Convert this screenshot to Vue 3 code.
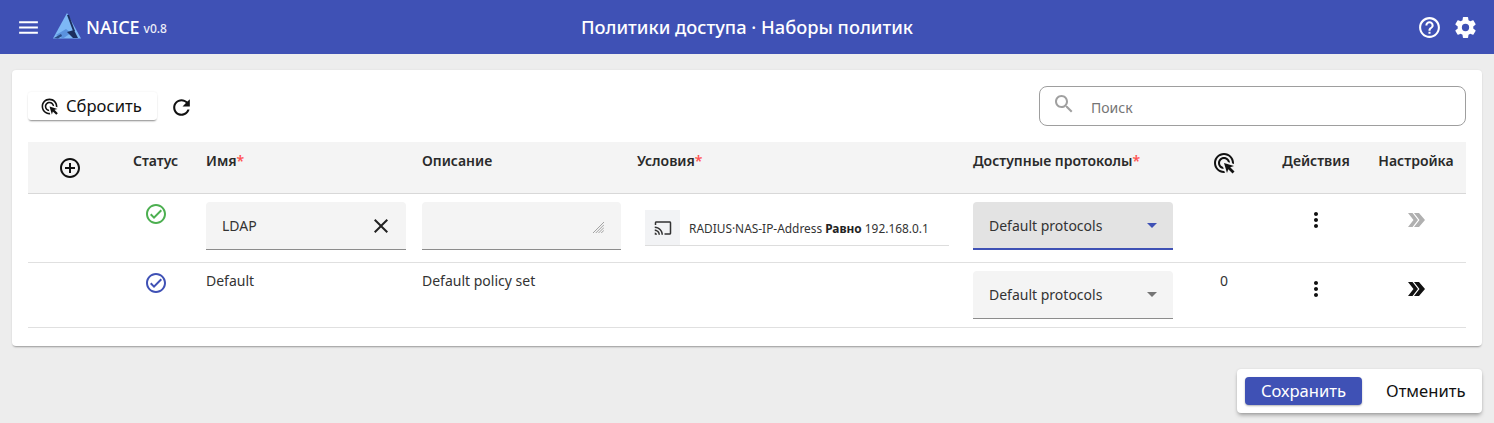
<script setup>
const icons = {
  menu: 'M3 18h18v-2H3v2zm0-5h18v-2H3v2zm0-7v2h18V6H3z',
  help: 'M11 18h2v-2h-2v2zm1-16C6.48 2 2 6.48 2 12s4.48 10 10 10 10-4.48 10-10S17.52 2 12 2zm0 18c-4.41 0-8-3.59-8-8s3.59-8 8-8 8 3.59 8 8-3.59 8-8 8zm0-14c-2.21 0-4 1.79-4 4h2c0-1.1.9-2 2-2s2 .9 2 2c0 2-3 1.75-3 5h2c0-2.25 3-2.5 3-5 0-2.21-1.79-4-4-4z',
  cog: 'M12,15.5A3.5,3.5 0 0,1 8.5,12A3.5,3.5 0 0,1 12,8.5A3.5,3.5 0 0,1 15.5,12A3.5,3.5 0 0,1 12,15.5M19.43,12.97C19.47,12.65 19.5,12.33 19.5,12C19.5,11.67 19.47,11.34 19.43,11L21.54,9.37C21.73,9.22 21.78,8.95 21.66,8.73L19.66,5.27C19.54,5.05 19.27,4.96 19.05,5.05L16.56,6.05C16.04,5.66 15.5,5.32 14.87,5.07L14.5,2.42C14.46,2.18 14.25,2 14,2H10C9.75,2 9.54,2.18 9.5,2.42L9.13,5.07C8.5,5.32 7.96,5.66 7.44,6.05L4.95,5.05C4.73,4.96 4.46,5.05 4.34,5.27L2.34,8.73C2.21,8.95 2.27,9.22 2.46,9.37L4.57,11C4.53,11.34 4.5,11.67 4.5,12C4.5,12.33 4.53,12.65 4.57,12.97L2.46,14.63C2.27,14.78 2.21,15.05 2.34,15.27L4.34,18.73C4.46,18.95 4.73,19.03 4.95,18.95L7.44,17.94C7.96,18.34 8.5,18.68 9.13,18.93L9.5,21.58C9.54,21.82 9.75,22 10,22H14C14.25,22 14.46,21.82 14.5,21.58L14.87,18.93C15.5,18.67 16.04,18.34 16.56,17.94L19.05,18.95C19.27,19.03 19.54,18.95 19.66,18.73L21.66,15.27C21.78,15.05 21.73,14.78 21.54,14.63L19.43,12.97Z',
  adsClick: 'M11.71,17.99C8.53,17.84,6,15.22,6,12c0-3.31,2.69-6,6-6c3.22,0,5.84,2.53,5.99,5.71l-2.1-0.63C15.48,9.31,13.89,8,12,8c-2.21,0-4,1.79-4,4c0,1.89,1.31,3.48,3.08,3.89L11.71,17.99z M22,12c0,0.3-0.01,0.6-0.04,0.9l-1.97-0.59C20,12.21,20,12.1,20,12c0-4.42-3.58-8-8-8s-8,3.58-8,8s3.58,8,8,8c0.1,0,0.21,0,0.31-0.01l0.59,1.97C12.6,21.99,12.3,22,12,22C6.48,22,2,17.52,2,12C2,6.48,6.48,2,12,2S22,6.48,22,12z M18.23,16.26L22,15l-10-3l3,10l1.26-3.77l4.27,4.27l1.98-1.98L18.23,16.26z',
  refresh: 'M17.65 6.35C16.2 4.9 14.21 4 12 4c-4.42 0-7.99 3.58-7.99 8s3.57 8 7.99 8c3.73 0 6.84-2.55 7.73-6h-2.08c-.82 2.33-3.04 4-5.65 4-3.31 0-6-2.69-6-6s2.69-6 6-6c1.66 0 3.14.69 4.22 1.78L13 11h7V4l-2.35 2.35z',
  search: 'M15.5 14h-.79l-.28-.27C15.41 12.59 16 11.11 16 9.5 16 5.91 13.09 3 9.5 3S3 5.91 3 9.5 5.91 16 9.5 16c1.61 0 3.09-.59 4.23-1.57l.27.28v.79l5 4.99L20.49 19l-4.99-5zm-6 0C7.01 14 5 11.99 5 9.5S7.01 5 9.5 5 14 7.01 14 9.5 11.99 14 9.5 14z',
  add: 'M13 7h-2v4H7v2h4v4h2v-4h4v-2h-4V7zm-1-5C6.48 2 2 6.48 2 12s4.48 10 10 10 10-4.48 10-10S17.52 2 12 2zm0 18c-4.41 0-8-3.59-8-8s3.59-8 8-8 8 3.59 8 8-3.59 8-8 8z',
  check: 'M12 2C6.48 2 2 6.48 2 12s4.48 10 10 10 10-4.48 10-10S17.52 2 12 2zm0 18c-4.41 0-8-3.59-8-8s3.59-8 8-8 8 3.59 8 8-3.59 8-8 8zm4.59-12.42L10 14.17l-2.59-2.58L6 13l4 4 8-8z',
  close: 'M19 6.41 17.59 5 12 10.59 6.41 5 5 6.41 10.59 12 5 17.59 6.41 19 12 13.41 17.59 19 19 17.59 13.41 12z',
  cast: 'M21 3H3c-1.1 0-2 .9-2 2v3h2V5h18v14h-7v2h7c1.1 0 2-.9 2-2V5c0-1.1-.9-2-2-2zM1 18v3h3c0-1.66-1.34-3-3-3zm0-4v2c2.76 0 5 2.24 5 5h2c0-3.87-3.13-7-7-7zm0-4v2c4.97 0 9 4.03 9 9h2c0-6.08-4.93-11-11-11z',
  dots: 'M12 8c1.1 0 2-.9 2-2s-.9-2-2-2-2 .9-2 2 .9 2 2 2zm0 2c-1.1 0-2 .9-2 2s.9 2 2 2 2-.9 2-2-.9-2-2-2zm0 6c-1.1 0-2 .9-2 2s.9 2 2 2 2-.9 2-2-.9-2-2-2z',
  chevrons: 'M0 0h4.5L10 7l-5.5 7H0l5.5-7zM6 0h5l6 7-6 7H6l5.5-7z',
}
</script>

<template>
  <div class="page">
    <header class="topbar">
      <div class="brand">
        <svg class="icon menu-icon" viewBox="0 0 24 24"><path :d="icons.menu" /></svg>
        <svg class="logo" viewBox="0 0 28 26">
          <polygon points="14,0 28,25.5 0,25.5" fill="#7db8f5" />
          <polygon points="3,22 13,16 18,20 10,25.5" fill="#5a92de" />
          <polygon points="14,2 16,2 22,18 20,18" fill="#1c2f5e" />
          <polygon points="14,19 21,17 25,25 20,25" fill="#1c2f5e" />
          <polygon points="1,25 8,21 9,23 5,25.5" fill="#2a4a85" />
        </svg>
        <span class="brand-name">NAICE</span>
        <span class="brand-version">v0.8</span>
      </div>
      <div class="page-title">Политики доступа · Наборы политик</div>
      <div class="top-actions">
        <svg class="icon top-icon" viewBox="0 0 24 24"><path :d="icons.help" /></svg>
        <svg class="icon top-icon" viewBox="0 0 24 24"><path :d="icons.cog" /></svg>
      </div>
    </header>

    <main class="card">
      <div class="toolbar">
        <div class="toolbar-left">
          <button class="reset-btn">
            <svg class="icon reset-icon" viewBox="0 0 24 24"><path :d="icons.adsClick" /></svg>
            <span>Сбросить</span>
          </button>
          <svg class="icon refresh-icon" viewBox="0 0 24 24"><path :d="icons.refresh" /></svg>
        </div>
        <div class="search">
          <svg class="icon search-icon" viewBox="0 0 24 24"><path :d="icons.search" /></svg>
          <span>Поиск</span>
        </div>
      </div>

      <div class="row head">
        <div class="cell center add-cell">
          <svg class="icon add-icon" viewBox="0 0 24 24"><path :d="icons.add" /></svg>
        </div>
        <div class="cell center">Статус</div>
        <div class="cell">Имя<span class="req">*</span></div>
        <div class="cell">Описание</div>
        <div class="cell">Условия<span class="req">*</span></div>
        <div class="cell">Доступные протоколы<span class="req">*</span></div>
        <div class="cell center">
          <svg class="icon head-click" viewBox="0 0 24 24"><path :d="icons.adsClick" /></svg>
        </div>
        <div class="cell center">Действия</div>
        <div class="cell center">Настройка</div>
      </div>

      <div class="row body-row first">
        <div class="cell"></div>
        <div class="cell center">
          <svg class="icon status green" viewBox="0 0 24 24"><path :d="icons.check" /></svg>
        </div>
        <div class="cell">
          <div class="field">
            <span>LDAP</span>
            <svg class="icon close-icon" viewBox="0 0 24 24"><path :d="icons.close" /></svg>
          </div>
        </div>
        <div class="cell">
          <div class="field textarea">
            <svg class="resizer" viewBox="0 0 10 10">
              <path d="M10 0 0 10M10 2.5 2.5 10M10 5 5 10M10 7.5 7.5 10" stroke="#8a8a8a" stroke-width="0.7" fill="none" />
            </svg>
          </div>
        </div>
        <div class="cell">
          <div class="condition">
            <div class="cast-box">
              <svg class="icon cast-icon" viewBox="0 0 24 24"><path :d="icons.cast" /></svg>
            </div>
            <div class="condition-text">RADIUS·NAS-IP-Address <b>Равно</b> 192.168.0.1</div>
          </div>
        </div>
        <div class="cell">
          <div class="field select focused">
            <span>Default protocols</span>
            <i class="arrow"></i>
          </div>
        </div>
        <div class="cell center"></div>
        <div class="cell center">
          <svg class="icon dots-icon" viewBox="0 0 24 24"><path :d="icons.dots" /></svg>
        </div>
        <div class="cell center">
          <svg class="chevrons muted" viewBox="0 0 17 14"><path :d="icons.chevrons" /></svg>
        </div>
      </div>

      <div class="row body-row second">
        <div class="cell"></div>
        <div class="cell center">
          <svg class="icon status blue" viewBox="0 0 24 24"><path :d="icons.check" /></svg>
        </div>
        <div class="cell plain">Default</div>
        <div class="cell plain">Default policy set</div>
        <div class="cell"></div>
        <div class="cell">
          <div class="field select">
            <span>Default protocols</span>
            <i class="arrow"></i>
          </div>
        </div>
        <div class="cell center plain">0</div>
        <div class="cell center">
          <svg class="icon dots-icon" viewBox="0 0 24 24"><path :d="icons.dots" /></svg>
        </div>
        <div class="cell center">
          <svg class="chevrons" viewBox="0 0 17 14"><path :d="icons.chevrons" /></svg>
        </div>
      </div>
    </main>

    <footer class="footer">
      <div class="save-bar">
        <button class="save-btn">Сохранить</button>
        <button class="cancel-btn">Отменить</button>
      </div>
    </footer>
  </div>
</template>

<style scoped>
.page {
  height: 423px;
  background: #ededed;
  font-family: "Noto Sans", sans-serif;
  font-size: 14px;
  color: #212121;
  overflow: hidden;
}

.icon {
  display: block;
  fill: currentColor;
}

.topbar {
  height: 54px;
  background: #3f51b5;
  color: #fff;
  display: flex;
  align-items: center;
  justify-content: space-between;
  padding: 0 16px;
  position: relative;
}

.brand {
  display: flex;
  align-items: center;
}

.menu-icon {
  width: 25px;
  height: 25px;
}

.logo {
  width: 28px;
  height: 26px;
  margin: -2px 0 0 12px;
}

.brand-name {
  font-size: 18px;
  font-weight: 500;
  margin-left: 5px;
}

.brand-version {
  font-size: 12px;
  font-weight: 500;
  margin: 3px 0 0 4px;
  opacity: 0.9;
}

.page-title {
  position: absolute;
  left: 0;
  right: 0;
  top: 13px;
  text-align: center;
  font-size: 18.3px;
  line-height: 27px;
  font-weight: 500;
  pointer-events: none;
}

.top-actions {
  display: flex;
  align-items: center;
  gap: 11px;
}

.top-icon {
  width: 25px;
  height: 25px;
}

.card {
  margin: 16px 12px 0;
  height: 276px;
  box-sizing: border-box;
  background: #fff;
  border-radius: 4px;
  padding: 16px 16px 0;
  box-shadow: 0 2px 2px -1px rgba(0, 0, 0, 0.35), 0 0 2px rgba(0, 0, 0, 0.08);
}

.toolbar {
  display: flex;
  justify-content: space-between;
  align-items: center;
  height: 40px;
  margin-bottom: 16px;
}

.toolbar-left {
  display: flex;
  align-items: center;
  gap: 12px;
}

button {
  font-family: inherit;
  border: none;
  cursor: pointer;
}

.reset-btn {
  display: flex;
  align-items: center;
  gap: 7px;
  height: 28px;
  width: 129px;
  padding: 0 0 0 12px;
  background: #fff;
  border-radius: 3px;
  font-size: 16.6px;
  color: #111;
  box-shadow: 0 2px 2px -1px rgba(0, 0, 0, 0.45), 0 0 2px rgba(0, 0, 0, 0.08);
}

.reset-btn span {
  margin-top: -2px;
}

.reset-icon {
  width: 19px;
  height: 19px;
}

.refresh-icon {
  width: 25px;
  height: 25px;
  color: #111;
  margin-top: 3px;
}

.search {
  width: 427px;
  height: 40px;
  box-sizing: border-box;
  border: 1px solid #9e9e9e;
  border-radius: 8px;
  display: flex;
  align-items: center;
  padding-left: 12px;
  color: #757575;
}

.search-icon {
  width: 24px;
  height: 24px;
  color: #a0a0a0;
  margin: -4px 15px 0 0;
}

.search span {
  font-size: 14px;
  padding-top: 2px;
}

.row {
  display: grid;
  grid-template-columns: 84px 87px 216px 215px 336px 216px 84px 100px 100px;
}

.cell {
  padding: 0 9px 0 7px;
  min-width: 0;
}

.center {
  display: flex;
  justify-content: center;
  padding: 0;
}

.head {
  height: 52px;
  box-sizing: border-box;
  background: #f4f4f4;
  border-bottom: 1px solid #d8d8d8;
  font-size: 14px;
  font-weight: 600;
  padding-top: 9px;
  color: #2a2a2a;
}

.req {
  color: #ff5252;
}

.add-cell {
  padding-top: 5px;
}

.add-icon {
  width: 24px;
  height: 24px;
  color: #111;
}

.head-click {
  width: 24px;
  height: 24px;
  color: #111;
}

.body-row {
  border-bottom: 1px solid #e0e0e0;
  box-sizing: border-box;
}

.first {
  height: 69px;
  padding-top: 8px;
}

.second {
  height: 65px;
  padding-top: 8px;
}

.status {
  width: 24px;
  height: 24px;
}

.green {
  color: #4caf50;
}

.blue {
  color: #3f51b5;
}

.field {
  height: 48px;
  box-sizing: border-box;
  width: 200px;
  background: #f4f4f4;
  border-radius: 4px 4px 0 0;
  border-bottom: 1px solid #8c8c8c;
  display: flex;
  align-items: center;
  justify-content: space-between;
  padding: 0 13px 0 16px;
  font-size: 14px;
  color: #333;
}

.close-icon {
  width: 24px;
  height: 24px;
  color: #222;
}

.textarea {
  width: 199px;
  position: relative;
}

.resizer {
  position: absolute;
  right: 17px;
  bottom: 16px;
  width: 11px;
  height: 11px;
}

.condition {
  display: flex;
  align-items: stretch;
  margin: 8px 0 0 8px;
  width: 304px;
  height: 35px;
  border-bottom: 1px solid #ddd;
}

.cast-box {
  width: 35px;
  background: #f2f3f5;
  display: flex;
  align-items: center;
  justify-content: center;
}

.cast-icon {
  width: 18px;
  height: 18px;
  color: #333;
}

.condition-text {
  padding-left: 9px;
  align-self: center;
  font-size: 11.9px;
  color: #333;
  white-space: nowrap;
}

.condition-text b {
  font-weight: 700;
  color: #222;
}

.select {
  padding-right: 16px;
}

.arrow {
  width: 0;
  height: 0;
  border-left: 5px solid transparent;
  border-right: 5px solid transparent;
  border-top: 5px solid #757575;
}

.focused {
  background: #e3e3e3;
  border-bottom: 2px solid #3f51b5;
}

.focused .arrow {
  border-top-color: #3f51b5;
}

.plain {
  color: #333;
  line-height: 20px;
}

.dots-icon {
  width: 24px;
  height: 24px;
  color: #111;
  margin-top: 6px;
}

.chevrons {
  width: 17px;
  height: 14px;
  fill: #111;
  margin-top: 11px;
}

.chevrons.muted {
  fill: #b0b0b0;
}

.footer {
  display: flex;
  justify-content: flex-end;
  padding: 23px 12px 0;
}

.save-bar {
  display: flex;
  align-items: center;
  gap: 24px;
  width: 245px;
  height: 44px;
  box-sizing: border-box;
  padding: 0 8px;
  background: #fff;
  border-radius: 4px;
  box-shadow: 0 3px 4px -1px rgba(0, 0, 0, 0.35), 0 0 2px rgba(0, 0, 0, 0.1);
}

.save-btn {
  width: 117px;
  height: 28px;
  padding: 0 0 2px;
  background: #3f51b5;
  color: #fff;
  border-radius: 4px;
  font-size: 16.6px;
  box-shadow: 0 1px 2px rgba(0, 0, 0, 0.3);
}

.cancel-btn {
  background: none;
  color: #111;
  font-size: 16.6px;
  padding: 0 0 2px;
  height: 28px;
}
</style>
